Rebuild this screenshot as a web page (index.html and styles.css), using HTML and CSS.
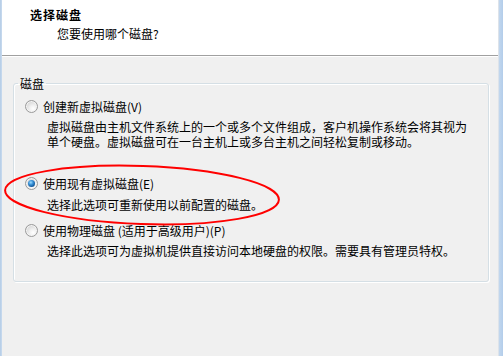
FILE: index.html
```html
<!DOCTYPE html>
<html lang="zh-CN">
<head>
<meta charset="utf-8">
<title>选择磁盘</title>
<link rel="stylesheet" href="styles.css">
</head>
<body>
<div class="window">
  <div class="edge edge-left"></div>
  <div class="main">
    <header class="header">
      <div class="title">选择磁盘</div>
      <div class="subtitle">您要使用哪个磁盘?</div>
    </header>
    <div class="content">
      <fieldset class="group">
        <legend class="group-label">磁盘</legend>
        <div class="option">
          <div class="row"><span class="radio"></span><span>创建新虚拟磁盘(V)</span></div>
          <p class="desc desc-wide">虚拟磁盘由主机文件系统上的一个或多个文件组成，客户机操作系统会将其视为单个硬盘。虚拟磁盘可在一台主机上或多台主机之间轻松复制或移动。</p>
        </div>
        <div class="option option-2">
          <div class="row"><span class="radio checked"></span><span>使用现有虚拟磁盘(E)</span></div>
          <p class="desc desc-2">选择此选项可重新使用以前配置的磁盘。</p>
        </div>
        <div class="option option-3">
          <div class="row"><span class="radio"></span><span>使用物理磁盘 (适用于高级用户)(P)</span></div>
          <p class="desc desc-3">选择此选项可为虚拟机提供直接访问本地硬盘的权限。需要具有管理员特权。</p>
        </div>
      </fieldset>
    </div>
  </div>
  <div class="edge edge-right"></div>
  <svg class="annotation" width="503" height="356" viewBox="0 0 503 356" aria-hidden="true">
    <ellipse cx="142" cy="195" rx="137" ry="29" transform="rotate(2 142 195)" fill="none" stroke="#ff0000" stroke-width="2"/>
  </svg>
</div>
</body>
</html>
```

FILE: styles.css
```css
html, body {
  margin: 0;
  padding: 0;
}

body {
  width: 503px;
  height: 356px;
  overflow: hidden;
  background: #f0f0f0;
  font-family: "Noto Sans CJK SC", "Noto Sans", "Liberation Sans", sans-serif;
  font-size: 12px;
  line-height: 15px;
  color: #000;
}

.window {
  position: relative;
  display: flex;
  width: 503px;
  height: 356px;
}

.edge-left {
  width: 2px;
  background: linear-gradient(to right, #b4cce6, #c9dbef);
}

.edge-right {
  width: 4px;
  background: linear-gradient(to right, #c2d7ee, #b3cdea);
}

.main {
  flex: 1;
  display: flex;
  flex-direction: column;
  background: #f0f0f0;
  border-right: 1px solid #dde3ea;
}

.header {
  height: 56px;
  box-sizing: border-box;
  padding: 7px 0 0 28px;
  background: #ffffff;
  border-bottom: 1px solid #a0a0a0;
  box-shadow: 0 1px 0 #ffffff;
}

.title {
  font-weight: bold;
  letter-spacing: 1px;
}

.subtitle {
  margin-top: 4px;
  padding-left: 27px;
}

.content {
  flex: 1;
  padding: 20px 9px 0 11px;
}

.group {
  margin: 0;
  padding: 8px 0 23px 4px;
  min-width: 0;
  border: 1px solid #d5dfe5;
  border-radius: 3px;
  box-shadow: inset 1px 1px 0 #ffffff, 1px 1px 0 #ffffff;
}

.group-label {
  padding: 0 2px;
  line-height: 15px;
}

.row {
  display: flex;
  align-items: center;
  gap: 5px;
  height: 15px;
  padding-left: 7px;
}

.radio {
  position: relative;
  flex: none;
  width: 11px;
  height: 11px;
  border-radius: 50%;
  border: 1px solid #9a9a9a;
  background: radial-gradient(circle at 65% 70%, #ffffff 0, #f2f2f2 30%, #d2d2d2 80%);
  box-shadow: inset 0 0 0 1px #f4f4f4;
}

.radio.checked::after {
  content: "";
  position: absolute;
  left: 2px;
  top: 2px;
  width: 7px;
  height: 7px;
  border-radius: 50%;
  background: radial-gradient(circle at 40% 35%, #9fdcff 0, #3a93d8 35%, #145a9c 70%, #0d3c6e 100%);
}

.desc {
  margin: 5px 0 0 0;
  padding-left: 29px;
}

.desc-wide {
  width: 425px;
}

.option-2 {
  margin-top: 27px;
}

.desc-2 {
  margin-top: 6px;
}

.option-3 {
  margin-top: 11px;
}

.desc-3 {
  margin-top: 5px;
}

.annotation {
  position: absolute;
  left: 0;
  top: 0;
  pointer-events: none;
}
```
